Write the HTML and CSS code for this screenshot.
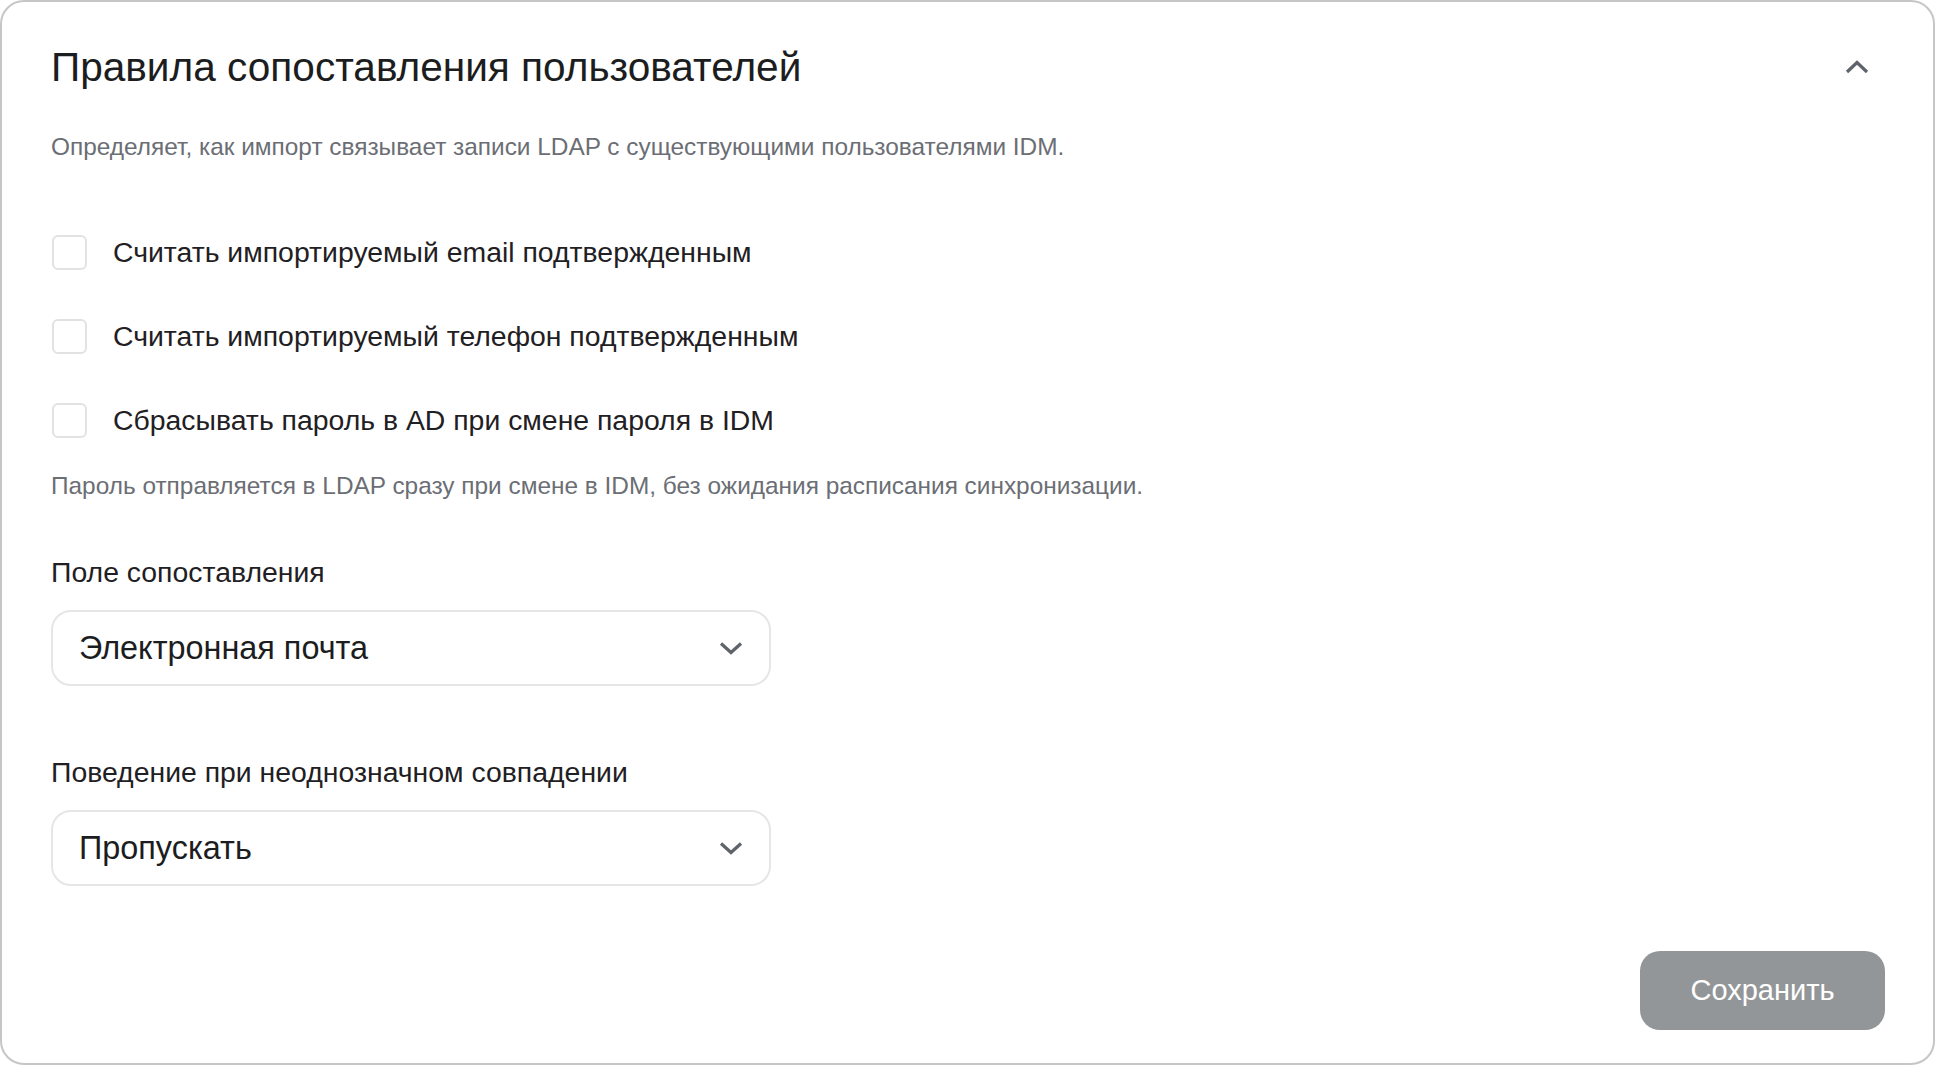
FILE: index.html
```html
<!DOCTYPE html>
<html lang="ru">
<head>
    <meta charset="UTF-8">
    <meta name="viewport" content="width=device-width, initial-scale=1.0">
    <title>Правила сопоставления пользователей</title>
    <link rel="stylesheet" href="styles.css">
</head>
<body>
    <section class="panel">
        <div class="panel-head">
            <h2 class="panel-title">Правила сопоставления пользователей</h2>
            <button class="collapse-btn" type="button" aria-label="Свернуть">
                <svg width="26" height="16" viewBox="0 0 26 16"><path d="M3 13 L13 3.5 L23 13" fill="none" stroke="#5f636b" stroke-width="3.2"/></svg>
            </button>
        </div>
        <p class="panel-desc">Определяет, как импорт связывает записи LDAP с существующими пользователями IDM.</p>

        <div class="checks">
            <label class="check-row"><span class="check-box"></span>Считать импортируемый email подтвержденным</label>
            <label class="check-row"><span class="check-box"></span>Считать импортируемый телефон подтвержденным</label>
            <label class="check-row"><span class="check-box"></span>Сбрасывать пароль в AD при смене пароля в IDM</label>
        </div>
        <p class="hint">Пароль отправляется в LDAP сразу при смене в IDM, без ожидания расписания синхронизации.</p>

        <div class="field">
            <div class="field-label">Поле сопоставления</div>
            <div class="select">
                <span>Электронная почта</span>
                <svg width="24" height="14" viewBox="0 0 24 14"><path d="M2 2.5 L12 11.5 L22 2.5" fill="none" stroke="#5f636b" stroke-width="3.2"/></svg>
            </div>
        </div>

        <div class="field second">
            <div class="field-label">Поведение при неоднозначном совпадении</div>
            <div class="select">
                <span>Пропускать</span>
                <svg width="24" height="14" viewBox="0 0 24 14"><path d="M2 2.5 L12 11.5 L22 2.5" fill="none" stroke="#5f636b" stroke-width="3.2"/></svg>
            </div>
        </div>

        <div class="actions">
            <button class="save-btn" type="button">Сохранить</button>
        </div>
    </section>
</body>
</html>
```

FILE: styles.css
```css
body {
    margin: 0;
    background: #fff;
    font-family: "Liberation Sans", Arial, sans-serif;
    color: #1f2023;
}
.panel {
    box-sizing: border-box;
    width: 1935px;
    height: 1065px;
    border: 2px solid #c6c6c6;
    border-radius: 24px;
    padding: 43px 48px 32px 49px;
}
.panel-head {
    display: flex;
    justify-content: space-between;
    align-items: center;
    height: 44px;
}
.panel-title {
    margin: 0;
    font-size: 40.6px;
    font-weight: normal;
    color: #1c1d20;
}
.collapse-btn {
    width: 56px;
    height: 44px;
    border: none;
    background: none;
    padding: 0;
    display: flex;
    align-items: center;
    justify-content: center;
}
.panel-desc {
    margin: 44px 0 0;
    font-size: 24.4px;
    line-height: 28px;
    color: #6b6e74;
}
.checks {
    margin-top: 73px;
    display: flex;
    flex-direction: column;
    gap: 48px;
}
.check-row {
    display: flex;
    align-items: center;
    gap: 26px;
    height: 36px;
    font-size: 28.4px;
    color: #1f2023;
}
.check-box {
    box-sizing: border-box;
    width: 35px;
    height: 35px;
    border: 2px solid #e2e2e2;
    border-radius: 6px;
    margin-left: 1px;
    flex: none;
}
.hint {
    margin: 34px 0 0;
    font-size: 24.4px;
    line-height: 28px;
    color: #6b6e74;
}
.field {
    margin-top: 56px;
}
.field.second {
    margin-top: 70px;
}
.field-label {
    font-size: 28.4px;
    line-height: 32px;
    color: #1f2023;
}
.select {
    box-sizing: border-box;
    margin-top: 22px;
    width: 720px;
    height: 76px;
    border: 2px solid #e6e6e6;
    border-radius: 20px;
    padding: 0 26px 0 26px;
    display: flex;
    align-items: center;
    justify-content: space-between;
    font-size: 32.4px;
    color: #1c1d20;
}
.actions {
    margin-top: 65px;
    display: flex;
    justify-content: flex-end;
}
.save-btn {
    width: 245px;
    height: 79px;
    border: none;
    border-radius: 20px;
    background: #939698;
    color: #fff;
    font-family: "Liberation Sans", Arial, sans-serif;
    font-size: 29px;
}
```
